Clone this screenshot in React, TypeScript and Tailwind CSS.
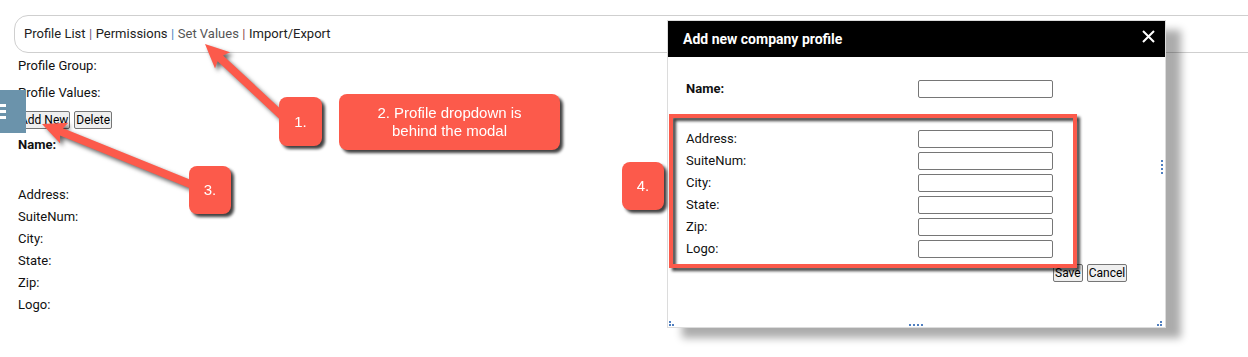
import React from 'react';

const fields = ['Address:', 'SuiteNum:', 'City:', 'State:', 'Zip:', 'Logo:'];

// builds an arrow polygon going from tail to tip
const arrowPoints = (tx: number, ty: number, hx: number, hy: number, shaft = 8, headLen = 21, headW = 22) => {
  const dx = hx - tx;
  const dy = hy - ty;
  const len = Math.sqrt(dx * dx + dy * dy);
  const ux = dx / len;
  const uy = dy / len;
  const px = -uy;
  const py = ux;
  const bx = hx - ux * headLen;
  const by = hy - uy * headLen;
  const pts = [
    [tx + (px * shaft) / 2, ty + (py * shaft) / 2],
    [bx + (px * shaft) / 2, by + (py * shaft) / 2],
    [bx + (px * headW) / 2 - ux * 3, by + (py * headW) / 2 - uy * 3],
    [hx, hy],
    [bx - (px * headW) / 2 - ux * 3, by - (py * headW) / 2 - uy * 3],
    [bx - (px * shaft) / 2, by - (py * shaft) / 2],
    [tx - (px * shaft) / 2, ty - (py * shaft) / 2],
  ];
  return pts.map((p) => p.join(',')).join(' ');
};

const Callout = ({ className, children }: { className: string; children: React.ReactNode }) => (
  <div
    className={`absolute flex items-center justify-center rounded-[8px] bg-[#fc5a4b] text-center text-[15px] leading-[18px] text-white font-['Liberation_Sans',Arial,sans-serif] drop-shadow-[3px_3px_1.5px_rgba(0,0,0,0.75)] ${className}`}
  >
    {children}
  </div>
);

const NativeButton = ({ children }: { children: React.ReactNode }) => (
  <button className="h-[18px] whitespace-nowrap rounded-[2px] border border-[#767676] bg-[#efefef] px-[1px] text-[12px] leading-[14px] text-black">
    {children}
  </button>
);

const Dot = () => <span className="h-[2px] w-[2px] bg-[#4f7fc0]" />;
const Gap = () => <span className="h-[2px] w-[2px]" />;

const App = () => {
  return (
    <div className="relative h-[357px] w-[1248px] overflow-hidden bg-white font-['Roboto','Liberation_Sans',sans-serif] text-[13px] text-[#111]">
      {/* page */}
      <div className="pt-[15px]">
        <div className="ml-[14px] mr-[-40px] flex h-[38px] items-center rounded-[14px] border border-[#cfcfcf] pl-[9px] text-[#222]">
          <span>Profile List</span>
          <span className="mx-[3.5px] text-[#6d5a80]">|</span>
          <span>Permissions</span>
          <span className="mx-[3.5px] text-[#4a86c5]">|</span>
          <span className="text-[#555]">Set Values</span>
          <span className="mx-[3.5px] text-[#8a4a4a]">|</span>
          <span>Import/Export</span>
        </div>

        <div className="pl-[18px] pt-[2px]">
          <div className="h-[22px] leading-[22px]">Profile Group:</div>
          <div className="mt-[5px] h-[22px] leading-[22px]">Profile Values:</div>
          <div className="mt-[7px] flex gap-[4px]">
            <NativeButton>Add New</NativeButton>
            <NativeButton>Delete</NativeButton>
          </div>
          <div className="mt-[5px] h-[22px] font-bold leading-[22px]">Name:</div>
          <div className="mt-[28px]">
            {fields.map((f) => (
              <div key={f} className="h-[22px] leading-[22px]">
                {f}
              </div>
            ))}
          </div>
        </div>
      </div>

      {/* side tab */}
      <div className="absolute left-0 top-[90px] flex h-[43px] w-[26px] flex-col justify-center gap-[3px] bg-[#6b93ab]">
        <span className="h-[3px] w-[6px] bg-white" />
        <span className="h-[3px] w-[6px] bg-white" />
        <span className="h-[3px] w-[6px] bg-white" />
      </div>

      {/* modal */}
      <div className="absolute left-[667px] top-[20px] flex h-[308px] w-[499px] flex-col border border-[#dcdcdc] bg-white shadow-[15px_10px_8px_rgba(0,0,0,0.33)]">
        <div className="flex h-[36px] shrink-0 items-center justify-between bg-black pl-[15px] pr-[10px]">
          <span className="text-[14px] font-bold text-white">Add new company profile</span>
          <svg width="13" height="13" viewBox="0 0 13 13" className="mb-[6px]">
            <path d="M1 1L12 12M12 1L1 12" stroke="white" strokeWidth="2" />
          </svg>
        </div>
        <div className="flex flex-1">
          <div className="flex-1 pl-[18px] pt-[21px]">
            <div className="grid h-[22px] grid-cols-[232px_135px] items-center">
              <span className="font-bold">Name:</span>
              <input className="h-[18px] w-[135px] rounded-[2px] border border-[#767676] bg-white" />
            </div>
            <div className="mt-[28px]">
              {fields.map((f) => (
                <div key={f} className="grid h-[22px] grid-cols-[232px_135px] items-center">
                  <span>{f}</span>
                  <input className="h-[18px] w-[135px] rounded-[2px] border border-[#767676] bg-white" />
                </div>
              ))}
            </div>
            <div className="mt-[4px] flex gap-[4px] pl-[367px]">
              <NativeButton>Save</NativeButton>
              <NativeButton>Cancel</NativeButton>
            </div>
          </div>
          {/* right resize grip */}
          <div className="flex w-[4px] flex-col gap-[2px] pt-[103px]">
            <Dot />
            <Dot />
            <Dot />
            <Dot />
          </div>
        </div>
        {/* bottom resize grips */}
        <div className="flex h-[6px] items-end justify-between px-[1px] pb-[1px]">
          <div className="grid grid-cols-2 gap-[1px]">
            <Dot />
            <Gap />
            <Dot />
            <Dot />
          </div>
          <div className="flex gap-[2px]">
            <Dot />
            <Dot />
            <Dot />
            <Dot />
          </div>
          <div className="grid grid-cols-2 gap-[1px] pr-[2px]">
            <Gap />
            <Dot />
            <Dot />
            <Dot />
          </div>
        </div>
      </div>

      {/* annotations */}
      <div className="absolute left-[669px] top-[114px] h-[154px] w-[408px] border-[4px] border-[#fc5a4b] drop-shadow-[3px_3px_1.5px_rgba(0,0,0,0.75)]" />

      <svg
        width="1248"
        height="357"
        className="pointer-events-none absolute left-0 top-0 drop-shadow-[3px_3px_2px_rgba(0,0,0,0.6)]"
      >
        <polygon points={arrowPoints(295, 128, 205, 44)} fill="#fc5a4b" />
        <polygon points={arrowPoints(205, 190, 42, 124)} fill="#fc5a4b" />
      </svg>

      <Callout className="left-[279px] top-[97px] h-[49px] w-[43px]">1.</Callout>
      <Callout className="left-[339px] top-[94px] h-[56px] w-[221px]">
        2. Profile dropdown is
        <br />
        behind the modal
      </Callout>
      <Callout className="left-[189px] top-[166px] h-[48px] w-[42px]">3.</Callout>
      <Callout className="left-[622px] top-[162px] h-[48px] w-[42px]">4.</Callout>
    </div>
  );
};

export default App;
